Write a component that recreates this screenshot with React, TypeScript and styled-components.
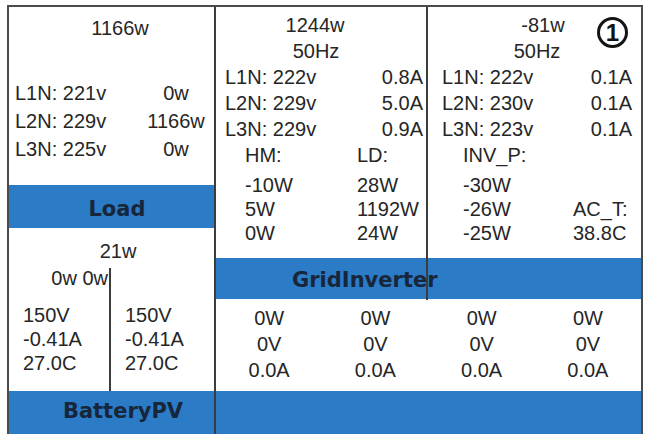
import React from 'react';
import styled, { createGlobalStyle } from 'styled-components';

const GlobalStyle = createGlobalStyle`
	html,
	body {
		margin: 0;
		padding: 0;
		background: #ffffff;
		overflow: hidden;
	}
	body {
		font-family: 'Liberation Sans', Arial, sans-serif;
		color: #262626;
	}
`;

const BLUE = '#2b7bc7';
const LINE = '#3c3c3c';

// outer frame: left half (load + battery) / right half (grid + inverter)
const Frame = styled.div`
	margin: 5px 0 0 7px;
	width: 636px;
	box-sizing: border-box;
	border: 2px solid #4a4a4a;
	border-bottom: none;
	display: grid;
	grid-template-columns: 207px 1fr;
	grid-template-rows: 384px 50px;
`;

const Column = styled.div<{ $divider?: boolean }>`
	display: flex;
	flex-direction: column;
	min-width: 0;
	border-right: ${({ $divider }) => ($divider ? `2px solid ${LINE}` : 'none')};
`;

const Section = styled.div<{ $h?: number; $pt?: number }>`
	display: flex;
	flex-direction: column;
	flex: ${({ $h }) => ($h ? `0 0 ${$h}px` : '1 1 auto')};
	padding-top: ${({ $pt }) => $pt ?? 0}px;
	box-sizing: border-box;
	font-size: 20px;
	min-height: 0;
`;

const Band = styled.div<{ $h?: number; $pt: number; $lh: number; $pl: number; $center?: boolean }>`
	position: relative;
	flex: ${({ $h }) => ($h ? `0 0 ${$h}px` : '1 1 auto')};
	box-sizing: border-box;
	background: ${BLUE};
	color: #18263a;
	font-family: 'DejaVu Sans', 'Liberation Sans', sans-serif;
	font-weight: bold;
	font-size: 21px;
	padding-top: ${({ $pt }) => $pt}px;
	padding-left: ${({ $pl }) => $pl}px;
	line-height: ${({ $lh }) => $lh}px;
	text-align: ${({ $center }) => ($center ? 'center' : 'left')};
	white-space: nowrap;
`;

// the col2 / col3 divider runs on through the GridInverter band
const SplitBand = styled(Band)`
	&::after {
		content: '';
		position: absolute;
		top: 0;
		bottom: -1px;
		left: 210px;
		width: 2px;
		background: ${LINE};
	}
`;

const Heading = styled.div<{ $lh?: number; $shift?: number }>`
	line-height: ${({ $lh }) => $lh ?? 26}px;
	text-align: center;
	padding-left: ${({ $shift }) => Math.max($shift ?? 0, 0)}px;
	padding-right: ${({ $shift }) => Math.max(-($shift ?? 0), 0)}px;
	white-space: nowrap;
`;

// col1 phase rows: label left, watts centered in their own column
const LoadRow = styled.div`
	display: grid;
	grid-template-columns: 1fr 66px;
	padding: 0 5px 0 6px;
	line-height: 28px;
	white-space: nowrap;

	& > span:last-child {
		text-align: center;
	}
`;

const LoadList = styled.div<{ $mt: number }>`
	margin-top: ${({ $mt }) => $mt}px;
`;

const PhaseRow = styled.div<{ $pl: number; $pr: number }>`
	display: flex;
	justify-content: space-between;
	padding: 0 ${({ $pr }) => $pr}px 0 ${({ $pl }) => $pl}px;
	line-height: 26px;
	white-space: nowrap;
`;

const Meter = styled.div<{ $pl: number; $col: number }>`
	display: grid;
	grid-template-columns: ${({ $col }) => $col}px 1fr;
	padding-left: ${({ $pl }) => $pl}px;
	white-space: nowrap;
`;

const MeterHead = styled.div`
	line-height: 26px;
	grid-column: span 1;
`;

const MeterValue = styled.div<{ $first?: boolean }>`
	line-height: 24px;
	margin-top: ${({ $first }) => ($first ? 5 : 0)}px;
`;

const GridTop = styled.div`
	flex: 0 0 251px;
	display: grid;
	grid-template-columns: 212px 1fr;
`;

const GridCell = styled(Section)<{ $divider?: boolean }>`
	position: relative;
	border-right: ${({ $divider }) => ($divider ? `2px solid ${LINE}` : 'none')};
`;

const Badge = styled.div`
	position: absolute;
	top: 10px;
	right: 13px;
	width: 31px;
	height: 31px;
	box-sizing: border-box;
	border: 3px solid #141414;
	border-radius: 50%;
	display: flex;
	align-items: center;
	justify-content: center;
	font-weight: bold;
	font-size: 24px;
	line-height: 1;
	color: #141414;
`;

const StringStats = styled.div`
	display: grid;
	grid-template-columns: repeat(4, 1fr);
	padding-top: 6px;
	line-height: 26px;
	text-align: center;
`;

const BatterySplit = styled.div`
	flex: 1 1 auto;
	margin-top: 4px;
	display: grid;
	grid-template-columns: 102px 1fr;
`;

const BatteryCell = styled.div<{ $divider?: boolean; $pt: number }>`
	border-right: ${({ $divider }) => ($divider ? `2px solid ${LINE}` : 'none')};
	padding-top: ${({ $pt }) => $pt}px;
	white-space: nowrap;
`;

const Flow = styled.div`
	text-align: right;
	padding-right: 1px;
	line-height: 20px;
`;

const Readings = styled.div<{ $mt: number }>`
	margin-top: ${({ $mt }) => $mt}px;
	padding-left: 14px;
	line-height: 24px;
`;

const loadPhases = [
	['L1N: 221v', '0w'],
	['L2N: 229v', '1166w'],
	['L3N: 225v', '0w'],
];

const gridPhases = [
	['L1N: 222v', '0.8A'],
	['L2N: 229v', '5.0A'],
	['L3N: 229v', '0.9A'],
];

const invPhases = [
	['L1N: 222v', '0.1A'],
	['L2N: 230v', '0.1A'],
	['L3N: 223v', '0.1A'],
];

const battery = ['150V', '-0.41A', '27.0C'];

const App: React.FC = () => (
	<>
		<GlobalStyle />
		<Frame>
			<Column $divider>
				<Section $h={178} $pt={8}>
					<Heading $lh={27} $shift={17}>
						1166w
					</Heading>
					<LoadList $mt={37}>
						{loadPhases.map(([l, v]) => (
							<LoadRow key={l}>
								<span>{l}</span>
								<span>{v}</span>
							</LoadRow>
						))}
					</LoadList>
				</Section>
				<Band $h={43} $pt={6} $lh={37} $pl={11} $center>
					Load
				</Band>
				<Section $pt={10}>
					<Heading $shift={13}>21w</Heading>
					<BatterySplit>
						<BatteryCell $divider $pt={0}>
							<Flow>0w 0w</Flow>
							<Readings $mt={15}>
								{battery.map((b) => (
									<div key={b}>{b}</div>
								))}
							</Readings>
						</BatteryCell>
						<BatteryCell $pt={35}>
							<Readings $mt={0}>
								{battery.map((b) => (
									<div key={b}>{b}</div>
								))}
							</Readings>
						</BatteryCell>
					</BatterySplit>
				</Section>
			</Column>

			<Column>
				<GridTop>
					<GridCell $divider $pt={5}>
						<Heading $shift={-12}>1244w</Heading>
						<Heading $shift={-10}>50Hz</Heading>
						{gridPhases.map(([l, v]) => (
							<PhaseRow key={l} $pl={9} $pr={3}>
								<span>{l}</span>
								<span>{v}</span>
							</PhaseRow>
						))}
						<Meter $pl={29} $col={112}>
							<MeterHead>HM:</MeterHead>
							<MeterHead>LD:</MeterHead>
							<MeterValue $first>-10W</MeterValue>
							<MeterValue $first>28W</MeterValue>
							<MeterValue>5W</MeterValue>
							<MeterValue>1192W</MeterValue>
							<MeterValue>0W</MeterValue>
							<MeterValue>24W</MeterValue>
						</Meter>
					</GridCell>
					<GridCell $pt={5}>
						<Badge>1</Badge>
						<Heading $shift={17}>-81w</Heading>
						<Heading $shift={5}>50Hz</Heading>
						{invPhases.map(([l, v]) => (
							<PhaseRow key={l} $pl={14} $pr={9}>
								<span>{l}</span>
								<span>{v}</span>
							</PhaseRow>
						))}
						<Meter $pl={35} $col={110}>
							<MeterHead>INV_P:</MeterHead>
							<MeterHead />
							<MeterValue $first>-30W</MeterValue>
							<MeterValue $first />
							<MeterValue>-26W</MeterValue>
							<MeterValue>AC_T:</MeterValue>
							<MeterValue>-25W</MeterValue>
							<MeterValue>38.8C</MeterValue>
						</Meter>
					</GridCell>
				</GridTop>
				<SplitBand $h={41} $pt={4} $lh={37} $pl={76}>
					GridInverter
				</SplitBand>
				<Section>
					<StringStats>
						{[0, 1, 2, 3].map((i) => (
							<div key={i}>
								<div>0W</div>
								<div>0V</div>
								<div>0.0A</div>
							</div>
						))}
					</StringStats>
				</Section>
			</Column>

			<Column $divider>
				<Band $pt={0} $lh={40} $pl={23} $center>
					BatteryPV
				</Band>
			</Column>
			<Column>
				<Band $pt={0} $lh={40} $pl={0} />
			</Column>
		</Frame>
	</>
);

export default App;
